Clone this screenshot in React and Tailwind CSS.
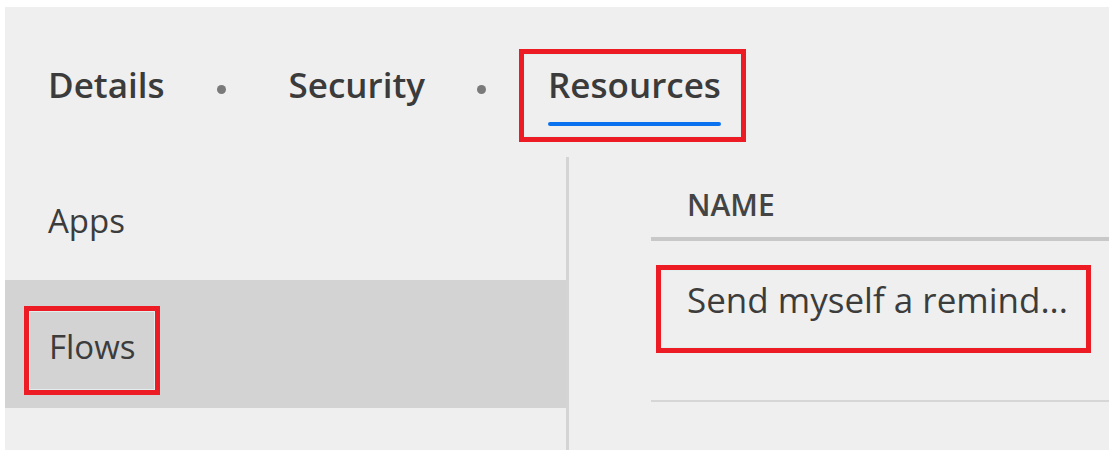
const font = { fontFamily: '"Open Sans", "Noto Sans", sans-serif' };

function Tab({ label, active }) {
  return (
    <div
      className={
        "flex flex-col border-[5px] pl-[24px] pr-[20px] pt-[11px] pb-[11px] " +
        (active ? "border-[#ed1c24] shadow-[inset_0_0_0_1px_#e3eeee]" : "border-transparent")
      }
    >
      <span className="text-[35px] leading-[40px] font-semibold text-[#3b3b3b] whitespace-nowrap">{label}</span>
      <div className={"mt-[17px] h-[4px] rounded-full " + (active ? "bg-[#0a72ef]" : "bg-transparent")} />
    </div>
  );
}

function Dot({ last }) {
  return <div className={"w-[9px] h-[9px] rounded-full bg-[#7a7a7a] -mt-[12px] ml-[27px] " + (last ? "mr-[33px]" : "mr-[34px]")} />;
}

export default function App() {
  return (
    <div className="w-[1117px] h-[454px] bg-white pt-[7px] pl-[5px] pr-[8px] pb-[4px]" style={font}>
      <div className="w-full h-full bg-[#efefef] flex flex-col">
        {/* tabs */}
        <div className="h-[150px] shrink-0 flex items-start pt-[42px] pl-[14px]">
          <div className="flex items-center">
            <Tab label="Details" />
            <Dot />
            <Tab label="Security" />
            <Dot last />
            <Tab label="Resources" active />
          </div>
        </div>

        <div className="flex flex-1 min-h-0">
          {/* left nav */}
          <div className="w-[561px] shrink-0 flex flex-col">
            <div className="h-[123px] pt-[44px] pl-[43px]">
              <span className="text-[33px] leading-[40px] text-[#3c3c3c]">Apps</span>
            </div>
            <div className="h-[128px] bg-[#d3d3d3] pt-[26px] pl-[19px]">
              <div className="inline-flex border-[5px] border-[#ed1c24] shadow-[inset_0_0_0_1px_#e3eeee] pl-[20px] pr-[19px] pt-[16px] pb-[23px]">
                <span className="text-[33px] leading-[40px] text-[#3c3c3c]">Flows</span>
              </div>
            </div>
          </div>
          <div className="w-[3px] shrink-0 bg-[#d4d4d4]" />

          {/* table */}
          <div className="flex-1 pl-[82px]">
            <div className="pt-[33px] pb-[17px] pl-[36px] border-b-[4px] border-[#c8c8c8]">
              <span className="block text-[30px] leading-[30px] font-semibold text-[#444]">NAME</span>
            </div>
            <div className="pt-[24px] pb-[47px] pl-[5px] border-b-[2px] border-[#d6d6d6]">
              <div className="w-[435px] border-[5px] border-[#ed1c24] shadow-[inset_0_0_0_1px_#e3eeee] pl-[26px] pt-[10px] pb-[28px]">
                <span className="block text-[35px] leading-[40px] text-[#3c3c3c] whitespace-nowrap">Send myself a remind...</span>
              </div>
            </div>
          </div>
        </div>
      </div>
    </div>
  );
}
